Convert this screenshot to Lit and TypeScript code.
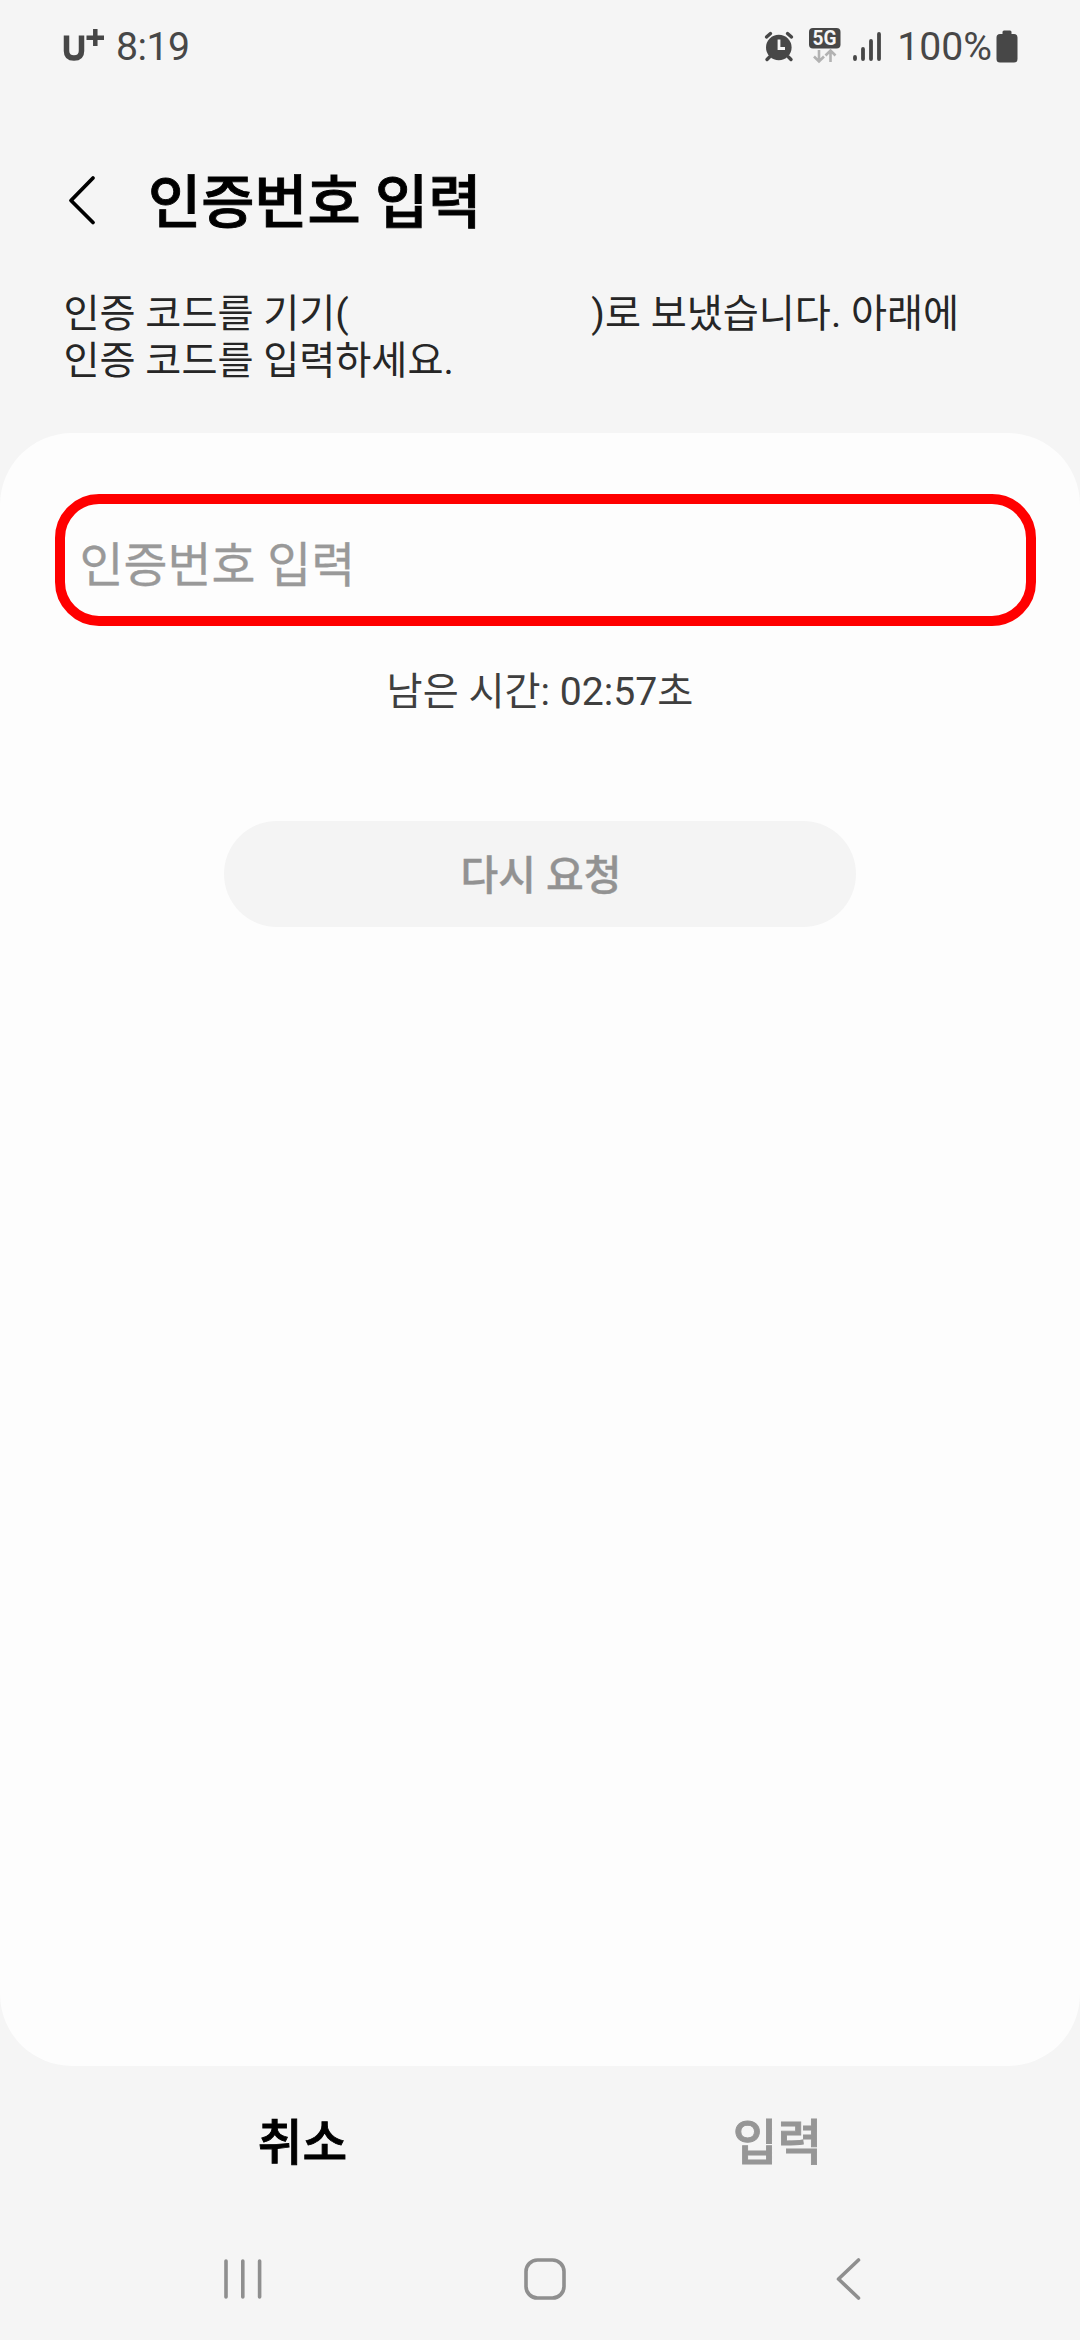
import { LitElement, html, css } from "lit";
import { customElement, property } from "lit/decorators.js";

@customElement("status-bar")
class StatusBar extends LitElement {
  static styles = css`
    :host {
      display: flex;
      align-items: flex-start;
      height: 150px;
      padding: 23px 62px 0 63px;
      box-sizing: border-box;
      color: #474747;
      font-size: 39.2px;
      line-height: 46px;
    }
    svg {
      display: block;
      flex: none;
    }
    span { padding-top: 1px; }
    .carrier { margin: 3px 11px 0 0; }
    .time { flex: 1; letter-spacing: -0.5px; }
    .alarm { margin-right: 15px; }
    .network { margin-right: 11px; }
    .signal { margin-right: 15px; }
    .badge {
      font: 700 19.5px Roboto, sans-serif;
      fill: #f5f5f5;
    }
    .battery { margin-left: 4px; }
  `;
  @property() time = "8:19";
  @property() charge = "100%";
  render() {
    return html`
      <svg class="carrier" width="42" height="40" viewBox="0 0 42 40" fill="none" stroke="#474747">
        <path d="M3.500 9.500v15.500q0 7 7.500 7t7.500-7v-15.500" stroke-width="5.500" />
        <path d="M23.500 11.800h17.500M32.300 3v17" stroke-width="4.500" />
      </svg>
      <span class="time">${this.time}</span>
      <svg class="alarm" width="30" height="42" viewBox="0 0 30 42">
        <circle cx="14.800" cy="24.500" r="12.800" fill="#474747" />
        <path d="M2.500 14l4-3.500M27.500 14l-4-3.500M5.500 34l-2.500 2.500M24.500 34l2.500 2.500" stroke="#474747" stroke-width="3.400" stroke-linecap="round" fill="none" />
        <path d="M15 16.500v9h6" stroke="#f5f5f5" stroke-width="2.800" fill="none" />
      </svg>
      <svg class="network" width="32" height="42" viewBox="0 0 32 42">
        <rect x="0" y="5" width="31.500" height="20.500" rx="4" fill="#474747" />
        <text class="badge" x="15.500" y="22.200" text-anchor="middle" textLength="24" lengthAdjust="spacingAndGlyphs">5G</text>
        <path d="M10 27v11.500M5 33.500l5 5 5-5M21.500 39v-11.500M16.500 32.500l5-5 5 5" stroke="#b2b2b2" stroke-width="2.600" fill="none" />
      </svg>
      <svg class="signal" width="30" height="42" viewBox="0 0 30 42">
        <path d="M3 34v2M11 26v10M19 18v18M27 11v25" stroke="#474747" stroke-width="3.800" stroke-linecap="round" />
      </svg>
      <span>${this.charge}</span>
      <svg class="battery" width="22" height="42" viewBox="0 0 22 42">
        <path d="M6.500 11v-2q0-1.500 1.500-1.500h6q1.500 0 1.500 1.500v2h2.500q3.500 0 3.500 3.500v21.500q0 3.500-3.500 3.500h-14q-3.500 0-3.500-3.500v-21.500q0-3.500 3.500-3.500z" fill="#474747" />
      </svg>
    `;
  }
}

@customElement("nav-bar")
class NavBar extends LitElement {
  static styles = css`
    :host {
      display: grid;
      grid-template-columns: repeat(3, 302.500px);
      justify-content: center;
      justify-items: center;
      align-items: center;
      height: 122px;
      padding-left: 10px;
    }
    svg {
      display: block;
      fill: none;
      stroke: #8f8f8f;
      stroke-width: 3.600;
      stroke-linecap: round;
      stroke-linejoin: round;
    }
  `;
  render() {
    return html`
      <svg width="42" height="44" viewBox="0 0 42 44"><path d="M4 4v36M20.800 4v36M37.600 4v36" /></svg>
      <svg width="44" height="44" viewBox="0 0 44 44"><rect x="3" y="3" width="38" height="38" rx="11.500" /></svg>
      <svg width="28" height="44" viewBox="0 0 28 44"><path d="M24.500 3l-20 19 20 19" /></svg>
    `;
  }
}

@customElement("app-root")
class AppRoot extends LitElement {
  static styles = css`
    :host {
      display: flex;
      flex-direction: column;
      width: 1080px;
      height: 2340px;
      background: #f5f5f5;
      font-family: Roboto, "Noto Sans CJK KR", sans-serif;
    }
    .header {
      display: flex;
      align-items: center;
      height: 100px;
      padding-left: 66px;
    }
    .back {
      display: block;
      width: 32px;
      height: 54px;
      margin-right: 50px;
    }
    h1 {
      margin: 0;
      padding-top: 6px;
      font-size: 57.800px;
      font-weight: 500;
      line-height: 80px;
      white-space: nowrap;
      -webkit-text-stroke: 0.9px currentColor;
    }
    .notice {
      height: 183px;
      margin: 0;
      padding: 41px 0 0 63.500px;
      box-sizing: border-box;
      font-size: 39.200px;
      line-height: 47.300px;
      color: #262626;
      white-space: nowrap;
    }
    .recipient {
      display: inline-block;
      width: 242.500px;
    }
    .card {
      display: flex;
      flex-direction: column;
      align-items: center;
      height: 1633px;
      padding-top: 61px;
      box-sizing: border-box;
      border-radius: 72px;
      background: #fdfdfd;
    }
    .field {
      display: flex;
      align-items: center;
      width: 981px;
      height: 132px;
      margin-left: 10px;
      padding: 3px 0 0 15px;
      box-sizing: border-box;
      border: 10px solid #ff0000;
      border-radius: 44px;
      font-size: 47.800px;
      color: #999;
      -webkit-text-stroke: 0.3px currentColor;
    }
    .remaining {
      margin-top: 36.500px;
      font-size: 39.200px;
      line-height: 58px;
      color: #3f3f3f;
    }
    .resend {
      display: flex;
      align-items: center;
      justify-content: center;
      width: 632px;
      height: 106px;
      margin-top: 100.500px;
      padding: 0 0 4px 2px;
      box-sizing: border-box;
      border-radius: 53px;
      background: #f4f4f4;
      font-size: 41px;
      font-weight: 500;
      color: #929292;
      -webkit-text-stroke: 0.4px currentColor;
    }
    .actions {
      display: grid;
      grid-template-columns: 475px 475px;
      justify-content: center;
      align-items: center;
      height: 152px;
      padding-bottom: 7px;
      box-sizing: border-box;
      font-size: 48.600px;
      font-weight: 500;
      text-align: center;
      -webkit-text-stroke: 0.9px currentColor;
    }
    .disabled { color: #969696; }
  `;
  render() {
    return html`
      <status-bar></status-bar>
      <div class="header">
        <svg class="back" viewBox="0 0 32 54" fill="none" stroke="#000" stroke-width="3.800" stroke-linecap="round" stroke-linejoin="round">
          <path d="M27 5l-22 22.500 22 22" />
        </svg>
        <h1>인증번호 입력</h1>
      </div>
      <p class="notice">인증 코드를 기기(<span class="recipient"></span>)로 보냈습니다. 아래에<br />인증 코드를 입력하세요.</p>
      <div class="card">
        <div class="field">인증번호 입력</div>
        <div class="remaining">남은 시간: 02:57초</div>
        <div class="resend">다시 요청</div>
      </div>
      <div class="actions">
        <span>취소</span>
        <span class="disabled">입력</span>
      </div>
      <nav-bar></nav-bar>
    `;
  }
}
